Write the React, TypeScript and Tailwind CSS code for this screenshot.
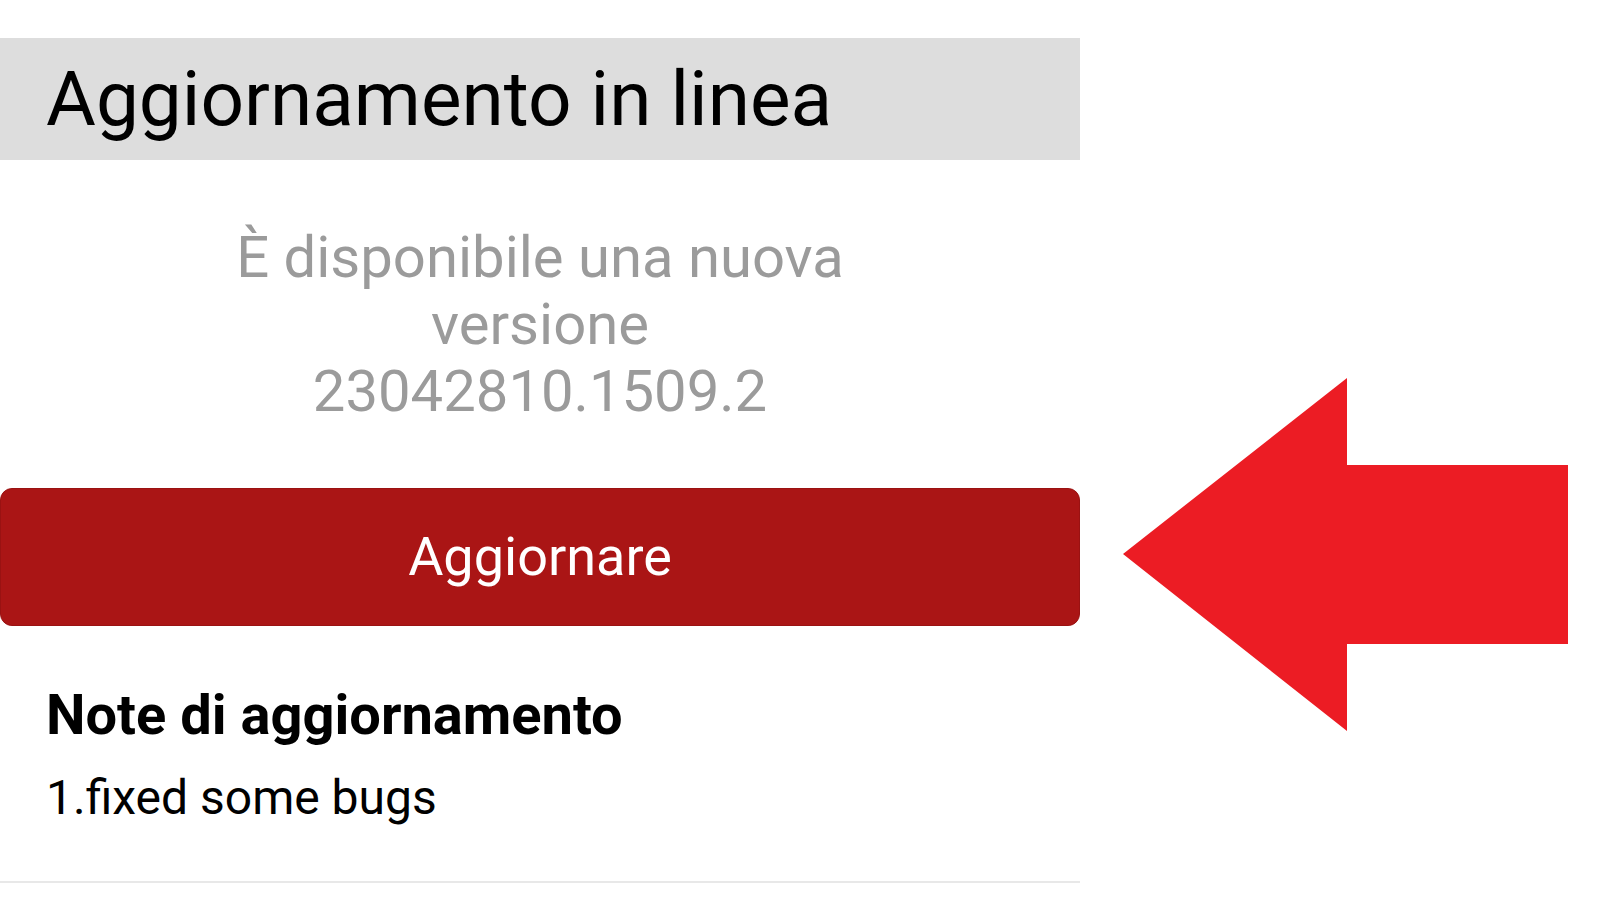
import React from 'react';

const font = { fontFamily: 'Roboto, "Noto Sans", sans-serif' };

const BigArrow = () => (
  <svg width="446" height="354" viewBox="0 0 446 354" className="block">
    <polygon points="0,176 224,0 224,87 445,87 445,266 224,266 224,353" fill="#ec1c24" />
  </svg>
);

const App: React.FC = () => {
  return (
    <div className="w-[1612px] h-[921px] bg-white flex overflow-hidden" style={font}>
      <div className="w-[1080px] flex flex-col pt-[38px]">
        <div className="h-[122px] bg-[#dddddd] pl-[46px] pt-[23px]">
          <h1 className="text-[76.5px] leading-[76px] text-black font-normal">Aggiornamento in linea</h1>
        </div>

        <p className="mt-[64px] text-center text-[58px] leading-[67px] text-[#9b9b9b]">
          È disponibile una nuova
          <br />
          versione
          <br />
          23042810.1509.2
        </p>

        <button className="mt-[63px] h-[138px] w-full rounded-[12px] bg-[#aa1515] border border-[#9a1212] flex items-center justify-center">
          <span className="text-[54px] leading-[54px] text-white">Aggiornare</span>
        </button>

        <div className="pl-[46px] mt-[62px]">
          <h2 className="text-[56px] leading-[55px] font-bold text-black">Note di aggiornamento</h2>
          <p className="mt-[31px] text-[48px] leading-[48px] text-black">1.fixed some bugs</p>
        </div>

        <div className="mt-[59px] h-[2px] bg-[#e8e8e8]" />
      </div>

      <div className="ml-[43px] mt-[378px]">
        <BigArrow />
      </div>
    </div>
  );
};

export default App;
